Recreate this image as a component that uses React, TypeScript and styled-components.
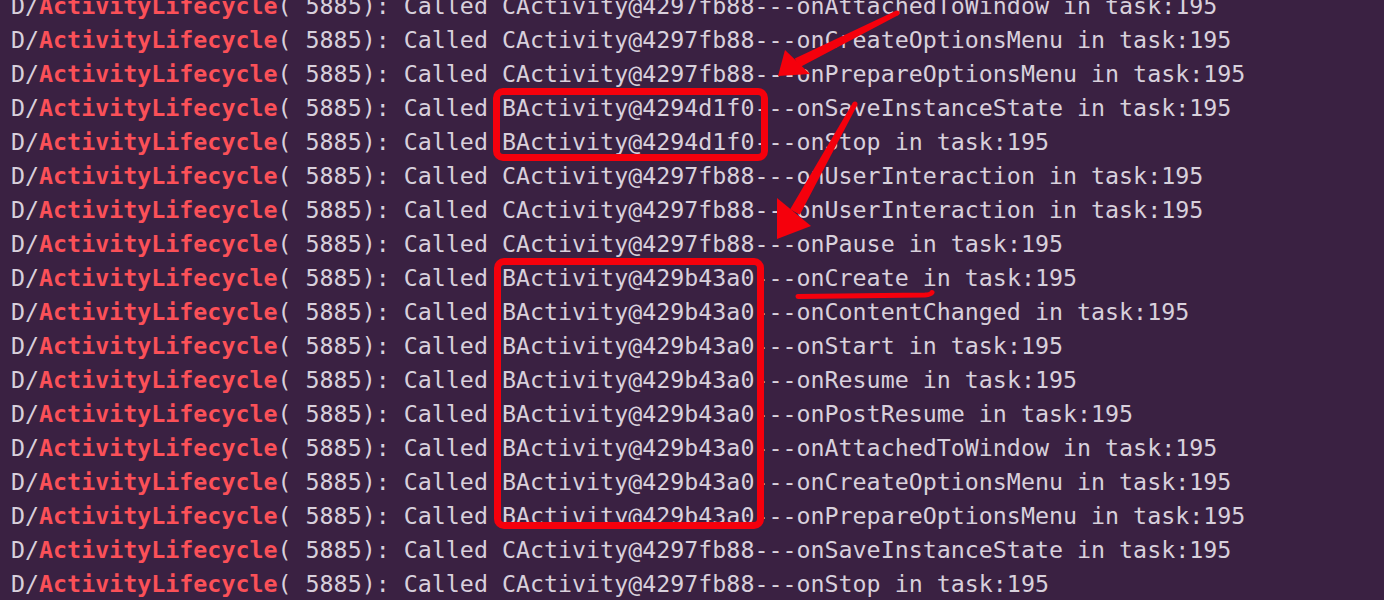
import React from "react";
import styled, { createGlobalStyle } from "styled-components";

const Global = createGlobalStyle`
  html, body { margin: 0; padding: 0; background: #3a2142; overflow: hidden; }
`;

const Screen = styled.div`
  position: relative;
  width: 1384px;
  height: 600px;
  overflow: hidden;
  background: #3a2142;
`;

const Log = styled.div`
  display: flex;
  flex-direction: column;
  margin-top: -11px;
  padding-left: 11px;
  font-family: "DejaVu Sans Mono", "Liberation Mono", monospace;
  font-size: 23.3px;
  line-height: 34px;
  color: #d8d0dc;
  white-space: pre;
`;

const Line = styled.div`
  height: 34px;
`;

const Tag = styled.span`
  color: #fb5058;
  font-weight: bold;
`;

const Box = styled.div<{ $top: number; $left: number; $w: number; $h: number }>`
  position: absolute;
  top: ${(p) => p.$top}px;
  left: ${(p) => p.$left}px;
  width: ${(p) => p.$w}px;
  height: ${(p) => p.$h}px;
  box-sizing: border-box;
  border: 7px solid #f5000c;
  border-radius: 10px;
`;

const Marks = styled.svg`
  position: absolute;
  top: 0;
  left: 0;
  pointer-events: none;
`;

const C = "CActivity@4297fb88";
const B1 = "BActivity@4294d1f0";
const B2 = "BActivity@429b43a0";

const rows: [string, string][] = [
  [C, "onAttachedToWindow"],
  [C, "onCreateOptionsMenu"],
  [C, "onPrepareOptionsMenu"],
  [B1, "onSaveInstanceState"],
  [B1, "onStop"],
  [C, "onUserInteraction"],
  [C, "onUserInteraction"],
  [C, "onPause"],
  [B2, "onCreate"],
  [B2, "onContentChanged"],
  [B2, "onStart"],
  [B2, "onResume"],
  [B2, "onPostResume"],
  [B2, "onAttachedToWindow"],
  [B2, "onCreateOptionsMenu"],
  [B2, "onPrepareOptionsMenu"],
  [C, "onSaveInstanceState"],
  [C, "onStop"],
];

export default function App() {
  return (
    <Screen>
      <Global />
      <Log>
        {rows.map(([obj, ev], i) => (
          <Line key={i}>
            D/<Tag>ActivityLifecycle</Tag>( 5885): Called {obj}---{ev} in task:195
          </Line>
        ))}
      </Log>
      <Box $top={88} $left={493} $w={275} $h={73} />
      <Box $top={258} $left={494} $w={270} $h={271} />
      <Marks width="1384" height="600" viewBox="0 0 1384 600">
        {/* arrow 1 */}
        <polygon points="898.1,15.2 895.9,10.8 794.8,58.5 799.2,67.5" fill="#f5000c" />
        <polygon points="778,76 785,50 810,74" fill="#f5000c" />
        <circle cx="897" cy="13" r="2.5" fill="#f5000c" />
        {/* arrow 2 */}
        <polygon points="857.2,105.2 852.8,102.8 790.2,209.3 799.8,214.7" fill="#f5000c" />
        <polygon points="777,239 777,198 811,226" fill="#f5000c" />
        <circle cx="855" cy="104" r="2.5" fill="#f5000c" />
        {/* underline */}
        <path
          d="M798 296.5 L 925 295 Q 931 294.5 932 292.5"
          stroke="#f5000c"
          strokeWidth="5"
          strokeLinecap="round"
          fill="none"
        />
      </Marks>
    </Screen>
  );
}
